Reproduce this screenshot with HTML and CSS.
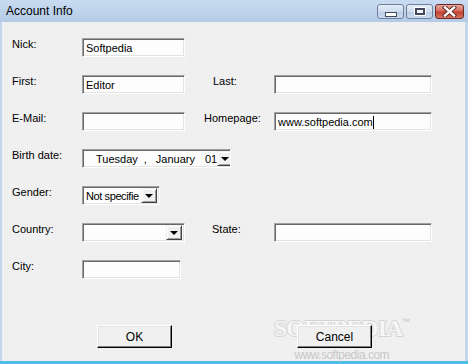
FILE: index.html
```html
<!DOCTYPE html>
<html lang="en">
<head>
    <meta charset="UTF-8">
    <title>Account Info</title>
    <link rel="stylesheet" href="styles.css">
</head>
<body>

    <div class="window">
        <!-- Title bar -->
        <div class="titlebar">
            <span class="title">Account Info</span>
            <div class="caption-btns">
                <div class="cap-btn"><span class="min-glyph"></span></div>
                <div class="cap-btn"><span class="max-glyph"></span></div>
                <div class="cap-btn close">
                    <svg width="15" height="11" viewBox="0 0 15 11">
                        <path d="M3 1.5 L12 9.5 M12 1.5 L3 9.5" stroke="#5a2220" stroke-width="4.2" stroke-linecap="square"/>
                        <path d="M3 1.5 L12 9.5 M12 1.5 L3 9.5" stroke="#ffffff" stroke-width="2.4" stroke-linecap="square"/>
                    </svg>
                </div>
            </div>
        </div>

        <!-- Dialog content -->
        <div class="client">
            <!-- watermark -->
            <div class="watermark">
                <div class="wm-logo">SOFTPEDIA<sup>™</sup></div>
                <div class="wm-url">www.softpedia.com</div>
            </div>

            <div class="form">
                <label class="lbl">Nick:</label>
                <div class="edit w-103">Softpedia</div>
                <span></span><span></span>

                <label class="lbl">First:</label>
                <div class="edit w-103">Editor</div>
                <label class="lbl lbl-last">Last:</label>
                <div class="edit w-158"></div>

                <label class="lbl">E-Mail:</label>
                <div class="edit w-103"></div>
                <label class="lbl">Homepage:</label>
                <div class="edit w-158">www.softpedia.com<span class="caret"></span></div>

                <label class="lbl">Birth date:</label>
                <div class="combo date-pick">
                    <span class="date-text">Tuesday</span>
                    <span class="date-sep">,</span>
                    <span class="date-text">January</span>
                    <span class="date-day">01</span>
                    <span class="drop-btn"><span class="arrow"></span></span>
                </div>
                <span></span>

                <label class="lbl">Gender:</label>
                <div class="combo w-78">
                    <span class="combo-text tight">Not specifie</span>
                    <span class="drop-btn"><span class="arrow"></span></span>
                </div>
                <span></span><span></span>

                <label class="lbl">Country:</label>
                <div class="combo w-103">
                    <span class="combo-text"></span>
                    <span class="drop-btn"><span class="arrow"></span></span>
                </div>
                <label class="lbl lbl-state">State:</label>
                <div class="edit w-158"></div>

                <label class="lbl">City:</label>
                <div class="edit w-99"></div>
            </div>

            <div class="actions">
                <button class="btn btn-ok">OK</button>
                <button class="btn btn-cancel">Cancel</button>
            </div>
        </div>
    </div>

</body>
</html>
```

FILE: styles.css
```css
body {
    margin: 0;
    padding: 0;
    font-family: "Liberation Sans", Arial, sans-serif;
    font-size: 11px;
    color: #000;
}
.window {
    width: 468px;
    height: 364px;
    display: flex;
    flex-direction: column;
    background: #c4d7ee;
    box-shadow: inset 0 -3px 0 #4fbde6;
    overflow: hidden;
}
.titlebar {
    height: 22px;
    flex: 0 0 22px;
    display: flex;
    align-items: flex-start;
    justify-content: space-between;
    background: linear-gradient(#c8dbf1, #b4cbe7);
}
.title {
    font-size: 12px;
    line-height: 14px;
    padding: 4px 0 0 6px;
    color: #000;
}
.caption-btns {
    display: flex;
    gap: 2px;
    padding: 4px 4px 0 0;
}
.cap-btn {
    width: 25px;
    height: 13px;
    border: 1px solid #71819a;
    border-radius: 3px;
    background: linear-gradient(#e4edf8 0%, #cfdcee 50%, #b9cce6 51%, #c9d9ee 100%);
    display: flex;
    align-items: center;
    justify-content: center;
}
.cap-btn.close {
    width: 27px;
    border-color: #6b2a27;
    background: linear-gradient(#e6a69b 0%, #d3695c 48%, #c2402f 52%, #d6745f 100%);
}
.min-glyph {
    width: 10px;
    height: 3px;
    margin-top: 5px;
    background: #fff;
    border: 1px solid #404a5c;
}
.max-glyph {
    width: 6px;
    height: 3px;
    border: 2px solid #404a5c;
    background: #f4f8fc;
    box-shadow: 0 0 0 1px #ffffff;
}
.client {
    position: relative;
    flex: 1;
    margin: 0 3px 3px 2px;
    padding: 16px 0 0 10px;
    background: repeating-linear-gradient(90deg, #f1f1f1 0 1px, #eeeeee 1px 2px);
}
.form {
    position: relative;
    display: grid;
    grid-template-columns: 70px 122px 70px 158px;
    grid-auto-rows: 19px;
    row-gap: 18px;
}
.lbl {
    line-height: 13px;
}
.lbl-last {
    padding-left: 9px;
}
.lbl-state {
    padding-left: 8px;
}
.edit, .combo {
    box-sizing: border-box;
    height: 19px;
    background: #fcfdfc;
    border: 1px solid;
    border-color: #a0a0a0 #ffffff #ffffff #a0a0a0;
    box-shadow: inset 1px 1px 0 #696969, inset -1px -1px 0 #e3e3e3;
    padding: 2px 3px 0 3px;
    line-height: 14px;
    white-space: nowrap;
    overflow: hidden;
}
.w-103 { width: 103px; }
.w-158 { width: 158px; }
.w-99 { width: 99px; }
.w-78 { width: 78px; }
.caret {
    display: inline-block;
    width: 1px;
    height: 13px;
    background: #000;
    vertical-align: -3px;
}
.combo {
    display: flex;
    align-items: stretch;
    padding: 2px 2px 2px 3px;
}
.combo-text {
    flex: 1;
    line-height: 14px;
    overflow: hidden;
}
.combo-text.tight {
    letter-spacing: -0.4px;
}
.date-pick {
    width: 149px;
    grid-column: span 2;
    padding-left: 13px;
}
.date-text {
    line-height: 14px;
}
.date-sep {
    line-height: 14px;
    margin: 0 9px 0 6px;
}
.date-day {
    line-height: 14px;
    margin-left: 10px;
    flex: 1;
}
.drop-btn {
    width: 16px;
    flex: 0 0 16px;
    box-sizing: border-box;
    margin-top: -1px;
    margin-bottom: -1px;
    background: #f0f0f0;
    border: 1px solid;
    border-color: #f0f0f0 #404040 #404040 #f0f0f0;
    box-shadow: inset 1px 1px 0 #ffffff, inset -1px -1px 0 #a0a0a0;
    display: flex;
    align-items: center;
    justify-content: center;
}
.arrow {
    width: 0;
    height: 0;
    border-left: 4px solid transparent;
    border-right: 4px solid transparent;
    border-top: 4px solid #000;
}
.actions {
    position: relative;
    display: flex;
    margin-top: 46px;
}
.btn {
    box-sizing: border-box;
    width: 75px;
    height: 23px;
    font-family: "Liberation Sans", Arial, sans-serif;
    font-size: 12px;
    color: #000;
    background: #f0f0f0;
    border: 1px solid;
    border-color: #ffffff #000000 #000000 #ffffff;
    box-shadow: inset -1px -1px 0 #808080, inset 1px 1px 0 #e3e3e3;
    padding: 0;
}
.btn-ok {
    margin-left: 85px;
}
.btn-cancel {
    margin-left: 125px;
}
.watermark {
    position: absolute;
    left: 272px;
    top: 288px;
    pointer-events: none;
    text-align: center;
}
.wm-logo {
    font-family: "Liberation Serif", "Times New Roman", serif;
    font-weight: bold;
    font-size: 24px;
    line-height: 24px;
    color: #f6f6f6;
    letter-spacing: -1px;
    text-shadow: 1px 0 #d4d4d4, -1px 0 #d4d4d4, 0 1px #d4d4d4, 0 -1px #d4d4d4;
}
.wm-logo sup {
    font-size: 8px;
    vertical-align: 12px;
    text-shadow: none;
    color: #c8c8c8;
}
.wm-url {
    font-size: 12px;
    color: #c8c8c8;
    margin-top: 8px;
    letter-spacing: -0.5px;
}
```
